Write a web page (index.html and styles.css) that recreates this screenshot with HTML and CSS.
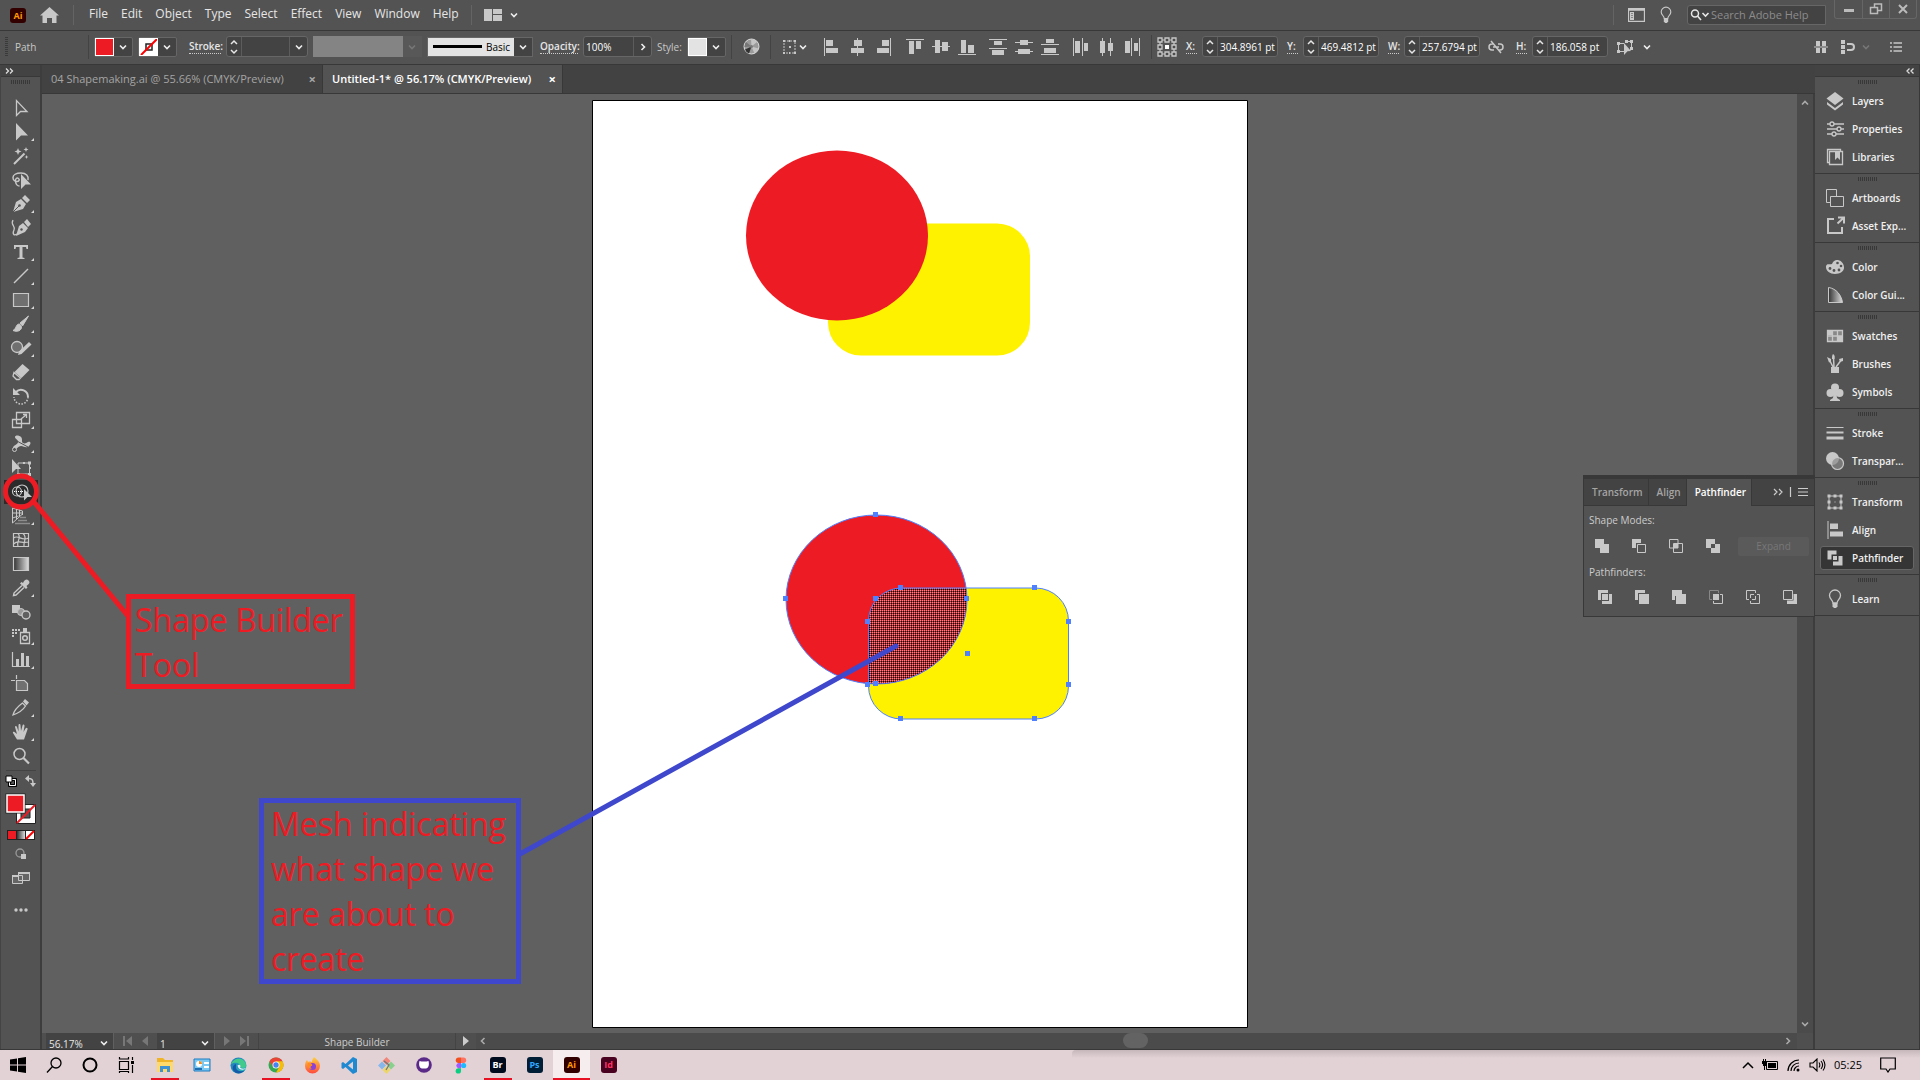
FILE: index.html
```html
<!DOCTYPE html>
<html lang="en">
<head>
<meta charset="utf-8">
<title>Untitled-1* @ 56.17% (CMYK/Preview)</title>
<link rel="stylesheet" href="styles.css">
</head>
<body>
<svg class="defs" aria-hidden="true">
  <defs>
    <symbol id="more" viewBox="0 0 28 24"><path d="M27 18v3h-3z" fill="#d8d8d8"/></symbol>
    <symbol id="chev" viewBox="0 0 10 10"><path d="M2 3.500l3 3 3-3" fill="none" stroke="currentColor" stroke-width="1.600"/></symbol>
    <symbol id="spin" viewBox="0 0 10 18"><path d="M2 6l3-3 3 3M2 12l3 3 3-3" fill="none" stroke="currentColor" stroke-width="1.500"/></symbol>
    <symbol id="bulb" viewBox="0 0 16 20"><path d="M6 14c0-3-3.500-4-3.500-7.500a5.500 5.500 0 0 1 11 0C13.500 10 10 11 10 14z" fill="none" stroke="currentColor" stroke-width="1.300"/><path d="M5.500 14h5v3.500l-1.500 1.500h-2l-1.500-1.500z" fill="currentColor"/></symbol>
    <linearGradient id="fade"><stop offset="0" stop-color="#333"/><stop offset="1" stop-color="#ddd"/></linearGradient>
    <linearGradient id="edgeBlue" x2="1" y2="1"><stop offset="0" stop-color="#1b6fc0"/><stop offset="1" stop-color="#2fc6b8"/></linearGradient>
    <linearGradient id="foxFire" x2="0" y2="1"><stop offset="0" stop-color="#ffd23c"/><stop offset="1" stop-color="#ff4a3d"/></linearGradient>
    <pattern id="mesh" width="2" height="2" patternUnits="userSpaceOnUse"><path d="M0 0h2v2h-2z" fill="#c4222a"/><path d="M0 0h1v1h-1z" fill="#f08a8e"/><path d="M1 1h1v1h-1z" fill="#000"/></pattern>
    <clipPath id="circleClip"><ellipse cx="284.500" cy="499.500" rx="90.500" ry="84.500"/></clipPath>
  </defs>
</svg>

<div class="app">
  <header class="menubar">
    <span class="logo">Ai</span>
    <button class="icon-btn home" aria-label="Home"><svg width="19" height="16" viewBox="0 0 19 16"><path d="M9.500 0L19 8.500h-2.500V16h-4.500v-5h-5v5H2.500V8.500H0z" fill="currentColor"/></svg></button>
    <span class="rule"></span>
    <nav class="menus">
      <button>File</button><button>Edit</button><button>Object</button><button>Type</button><button>Select</button><button>Effect</button><button>View</button><button>Window</button><button>Help</button>
    </nav>
    <span class="rule"></span>
    <button class="icon-btn workspace" aria-label="Arrange documents"><svg width="18" height="12" viewBox="0 0 18 12"><path d="M0 0h8v12H0zM9 0h9v5H9zM9 6h9v6H9z" fill="currentColor"/></svg><svg class="chev"><use href="#chev"/></svg></button>
    <div class="menubar-end">
      <span class="rule"></span>
      <button class="icon-btn" aria-label="Workspace"><svg width="17" height="14" viewBox="0 0 17 14"><path d="M.5.500h16v13H.5zM1 2h15" fill="none" stroke="currentColor" stroke-width="1.300"/><path d="M2 4h4v8H2z" fill="currentColor"/><path d="M3.500 5h1v1h-1zM3.500 7h1v1h-1zM3.500 9h1v1h-1z" fill="#444"/></svg></button>
      <button class="icon-btn" aria-label="Learn"><svg width="14" height="18"><use href="#bulb"/></svg></button>
      <label class="search"><svg width="20" height="12" viewBox="0 0 20 12"><circle cx="5" cy="4.500" r="3.500" fill="none" stroke="currentColor" stroke-width="1.500"/><path d="M7.500 7l3.500 4M12.500 4l3 3 3-3" fill="none" stroke="currentColor" stroke-width="1.600"/></svg><input type="text" placeholder="Search Adobe Help" aria-label="Search Adobe Help"></label>
      <div class="window-btns">
        <button aria-label="Minimize"><svg width="12" height="10" viewBox="0 0 12 10"><path d="M1 5h10v3H1z" fill="currentColor"/></svg></button>
        <button aria-label="Restore"><svg width="14" height="12" viewBox="0 0 14 12"><path d="M5.500 4V1h7v6.500H9M1.500 4.500h7v6h-7z" fill="none" stroke="currentColor" stroke-width="1.500"/></svg></button>
        <button aria-label="Close"><svg width="10" height="10" viewBox="0 0 10 10"><path d="M1 1l8 8M9 1L1 9" stroke="currentColor" stroke-width="2"/></svg></button>
      </div>
    </div>
  </header>

  <section class="controlbar" aria-label="Control">
    <span class="grip-v"></span>
    <span class="selection-name">Path</span>
    <span class="rule"></span>
    <button class="swatch-btn" aria-label="Fill"><span class="chip red"></span><svg class="chev"><use href="#chev"/></svg></button>
    <button class="swatch-btn" aria-label="Stroke color"><span class="chip"><svg width="20" height="20" viewBox="0 0 20 20"><path d="M7 7h6v6H7z" fill="none" stroke="#222" stroke-width="1.500"/><path d="M2 18L18 2" stroke="#f00" stroke-width="2"/></svg></span><svg class="chev"><use href="#chev"/></svg></button>
    <label class="lead" for="weight">Stroke:</label>
    <div class="field weight"><button class="spin" aria-label="Step weight"><svg><use href="#spin"/></svg></button><input id="weight" type="text" value=""><button class="drop" aria-label="Weights"><svg class="chev"><use href="#chev"/></svg></button></div>
    <button class="profile" aria-label="Width profile" disabled><span></span><svg class="chev"><use href="#chev"/></svg></button>
    <button class="brush" aria-label="Brush definition"><span><i></i>Basic</span><svg class="chev"><use href="#chev"/></svg></button>
    <label class="opacity-label" for="opacity">Opacity:</label>
    <div class="field opacity"><input id="opacity" type="text" value="100%"><button class="drop" aria-label="Opacity slider"><svg class="chev turn"><use href="#chev"/></svg></button></div>
    <span class="style-label">Style:</span>
    <button class="swatch-btn" aria-label="Graphic style"><span class="chip grey"></span><svg class="chev"><use href="#chev"/></svg></button>
    <span class="rule"></span>
    <button class="icon-btn recolor" aria-label="Recolor artwork"><svg width="17" height="17" viewBox="0 0 17 17"><circle cx="8.500" cy="8.500" r="7.500" fill="#9a9a9a" stroke="#ddd"/><path d="M8.500 8.500L8 1a7.500 7.500 0 0 1 6 3zM8.500 8.500l7 2a7.500 7.500 0 0 1-4 5z" fill="#c4c4c4"/><path d="M8.500 8.500L6 15.500a7 7 0 0 1-4-4z" fill="#333"/><path d="M8.500 8.500L1.500 9a7 7 0 0 1 1.500-5z" fill="#777"/><circle cx="8.500" cy="8.500" r="1.500" fill="#777"/></svg></button>
    <span class="rule"></span>
    <button class="icon-btn align-to" aria-label="Align to"><svg width="15" height="16" viewBox="0 0 15 16"><path d="M2 2h11v12H2z" fill="none" stroke="currentColor" stroke-dasharray="2 1"/><path d="M1 1h2v2H1zM12 1h2v2h-2zM1 13h2v2H1zM12 13h2v2h-2zM7 1h1v2H7zM7 13h1v2H7zM7 7h2v2H7z" fill="currentColor"/></svg><svg class="chev"><use href="#chev"/></svg></button>
    <div class="aligns">
      <button aria-label="Align left"><svg viewBox="0 0 18 18"><path d="M1 0h1v18H1zM3 2h7v6H3zM3 10h12v5H3z"/></svg></button>
      <button aria-label="Align center"><svg viewBox="0 0 18 18"><path d="M8 0h1v18H8zM5 2h8v6H5zM2 10h13v5H2z"/></svg></button>
      <button aria-label="Align right"><svg viewBox="0 0 18 18"><path d="M15 0h1v18h-1zM7 2h7v6H7zM2 10h12v5H2z"/></svg></button>
    </div>
    <div class="aligns">
      <button aria-label="Align top"><svg viewBox="0 0 18 18"><path d="M0 1h18v1H0zM3 3h5v13H3zM10 3h5v8h-5z"/></svg></button>
      <button aria-label="Align middle"><svg viewBox="0 0 18 18"><path d="M0 8h18v1H0zM3 2h5v13H3zM10 4h6v9h-6z"/></svg></button>
      <button aria-label="Align bottom"><svg viewBox="0 0 18 18"><path d="M0 16h18v1H0zM3 2h5v13H3zM10 7h6v8h-6z"/></svg></button>
    </div>
    <div class="aligns">
      <button aria-label="Distribute top"><svg viewBox="0 0 18 18"><path d="M0 1h18v1H0zM5 3h8v4H5zM0 10h18v1H0zM3 12h12v5H3z"/></svg></button>
      <button aria-label="Distribute middle"><svg viewBox="0 0 18 18"><path d="M0 4h18v1H0zM5 2h8v5H5zM0 13h18v1H0zM3 11h12v5H3z"/></svg></button>
      <button aria-label="Distribute bottom"><svg viewBox="0 0 18 18"><path d="M0 6h18v1H0zM5 1h8v4H5zM0 16h18v1H0zM3 10h12v5H3z"/></svg></button>
    </div>
    <div class="aligns">
      <button aria-label="Distribute left"><svg viewBox="0 0 18 18"><path d="M1 0h1v18H1zM3 3h5v12H3zM10 0h1v18h-1zM12 5h4v8h-4z"/></svg></button>
      <button aria-label="Distribute center"><svg viewBox="0 0 18 18"><path d="M4 0h1v18H4zM2 3h5v12H2zM12 0h1v18h-1zM10 5h5v8h-5z"/></svg></button>
      <button aria-label="Distribute right"><svg viewBox="0 0 18 18"><path d="M7 0h1v18H7zM1 3h5v12H1zM15 0h1v18h-1zM10 5h4v8h-4z"/></svg></button>
    </div>
    <span class="rule"></span>
    <button class="icon-btn" aria-label="Reference point"><svg width="20" height="20" viewBox="0 0 20 20"><path d="M3 3h14v14H3z" fill="none" stroke="currentColor" stroke-width="1.200"/><g fill="#4b4b4b" stroke="currentColor" stroke-width="1.300"><path d="M1 1h4v4H1zM8 1h4v4H8zM15 1h4v4h-4zM1 8h4v4H1zM15 8h4v4h-4zM1 15h4v4H1zM8 15h4v4H8zM15 15h4v4h-4z"/></g><path d="M8 8h4v4H8z" fill="#fff"/></svg></button>
    <label class="axis" for="fx">X:</label>
    <div class="field coord"><button class="spin" aria-label="Step X"><svg><use href="#spin"/></svg></button><input id="fx" type="text" value="304.8961 pt"></div>
    <label class="axis" for="fy">Y:</label>
    <div class="field coord"><button class="spin" aria-label="Step Y"><svg><use href="#spin"/></svg></button><input id="fy" type="text" value="469.4812 pt"></div>
    <label class="axis" for="fw">W:</label>
    <div class="field coord"><button class="spin" aria-label="Step width"><svg><use href="#spin"/></svg></button><input id="fw" type="text" value="257.6794 pt"></div>
    <button class="icon-btn link" aria-label="Constrain proportions"><svg width="16" height="14" viewBox="0 0 16 14"><path d="M6 4H4a3 3 0 0 0 0 6h2M10 4h2a3 3 0 0 1 0 6h-2M5 7h6M3 1l10 12" fill="none" stroke="currentColor" stroke-width="1.500"/></svg></button>
    <label class="axis" for="fh">H:</label>
    <div class="field coord"><button class="spin" aria-label="Step height"><svg><use href="#spin"/></svg></button><input id="fh" type="text" value="186.058 pt"></div>
    <button class="icon-btn isolate" aria-label="Isolate"><svg width="18" height="18" viewBox="0 0 18 18"><path d="M8 5.500H2.500v8H8M10 3.500h5.500v7" fill="none" stroke="currentColor"/><path d="M1 4h3v3H1zM1 12h3v3H1zM9 2h3v3H9zM14 2h3v3h-3zM14 9h3v3h-3zM8 5l7 8-3.500.3L8 17z" fill="currentColor"/></svg><svg class="chev"><use href="#chev"/></svg></button>
    <div class="control-end">
      <button class="icon-btn" aria-label="Snap to pixel"><svg width="14" height="14" viewBox="0 0 14 14"><path d="M2 1h4v5H2zM8 1h4v5H8zM2 8h4v5H2zM8 8h4v5H8zM0 6.500h14v1H0z" fill="currentColor"/></svg></button>
      <button class="icon-btn snap" aria-label="Snap options"><svg width="14" height="14" viewBox="0 0 14 14"><path d="M0 0h4v4H0zM0 5h4v4H0zM0 10h4v4H0z" fill="currentColor"/><path d="M6 4h4a3 3 0 0 1 0 6H6" fill="none" stroke="currentColor" stroke-width="2"/></svg><svg class="chev dim"><use href="#chev"/></svg></button>
      <button class="icon-btn" aria-label="Control menu"><svg width="12" height="10" viewBox="0 0 12 10"><path d="M0 1h2M3.500 1H12M0 5h2M3.500 5H12M0 9h2M3.500 9H12" stroke="currentColor" stroke-width="1.300"/></svg></button>
    </div>
  </section>

  <div class="workarea">
    <aside class="toolbar" aria-label="Tools">
      <div class="tool-head"><svg width="10" height="8" viewBox="0 0 10 8"><path d="M1 1.500l2.500 2.500L1 6.500M5 1.500l2.500 2.500L5 6.500" fill="none" stroke="#ddd" stroke-width="1.300"/></svg></div>
      <div class="grip-h"></div>
      <button class="tool" aria-label="Selection"><svg viewBox="0 0 28 24"><path d="M9.500 4.500v15l4-4h6.500z" fill="none" stroke="currentColor" stroke-width="1.300"/></svg></button>
      <button class="tool" aria-label="Direct selection"><svg viewBox="0 0 28 24"><path d="M9 3v17.500l5-5h7z" fill="currentColor"/><use href="#more"/></svg></button>
      <button class="tool" aria-label="Magic wand"><svg viewBox="0 0 28 24"><path d="M7 20L17.500 9.500" stroke="currentColor" stroke-width="2"/><path d="M11 4l1 2.500 2.500 1-2.500 1-1 2.500-1-2.500-2.500-1 2.500-1zM19 3l.7 1.800 1.800.7-1.800.7L19 8l-.7-1.800-1.800-.7 1.800-.7zM19.500 11l.6 1.500 1.400.5-1.400.6-.6 1.400-.6-1.400-1.400-.6 1.400-.5z" fill="currentColor"/></svg></button>
      <button class="tool" aria-label="Lasso"><svg viewBox="0 0 28 24"><path d="M21 12c1-4-2-7-7-7s-8 2-8 4.500 2 4 4 4 3-2 1.500-3-3.500 0-3 3 2 4.500 4 4.500" fill="none" stroke="currentColor" stroke-width="1.500"/><path d="M14 6v15l4.500-4.500H24z" fill="currentColor"/></svg></button>
      <button class="tool" aria-label="Pen"><svg viewBox="0 0 28 24"><path d="M6 20l3-10 5-3 5 5-3 5zM15 6l3-3 5 5-3 3z" fill="currentColor"/><path d="M6 20l6-6" stroke="#535353"/><circle cx="12.500" cy="13.500" r="1.300" fill="#535353"/><use href="#more"/></svg></button>
      <button class="tool" aria-label="Curvature"><svg viewBox="0 0 28 24"><path d="M6 4c-3 5 3 6 1 10s0 6 3 4" fill="none" stroke="currentColor" stroke-width="1.300"/><path d="M9 20l3-10 4-3 5 5-3 4zM17 6l3-3 4 5-3 3z" fill="currentColor"/><circle cx="14.500" cy="13.500" r="1.200" fill="#535353"/></svg></button>
      <button class="tool" aria-label="Type"><svg viewBox="0 0 28 24"><path d="M7 5h14v4h-1.500l-.5-2h-3.500v10.500l2 .5v1h-7v-1l2-.5V7H9l-.5 2H7z" fill="currentColor"/><use href="#more"/></svg></button>
      <button class="tool" aria-label="Line segment"><svg viewBox="0 0 28 24"><path d="M7 19L21 5" stroke="currentColor" stroke-width="1.500"/><use href="#more"/></svg></button>
      <button class="tool" aria-label="Rectangle"><svg viewBox="0 0 28 24"><path d="M6.500 5.500h15v13h-15z" fill="#707070" stroke="currentColor" stroke-width="1.200"/><use href="#more"/></svg></button>
      <button class="tool" aria-label="Paintbrush"><svg viewBox="0 0 28 24"><path d="M21.500 4L13 11l2.500 3z M12.500 12c-4 0-3 5-6.500 6.500 4 2 9 0 8.500-4z" fill="currentColor" stroke="currentColor"/><use href="#more"/></svg></button>
      <button class="tool" aria-label="Shaper"><svg viewBox="0 0 28 24"><circle cx="10" cy="11" r="5.500" fill="#707070" stroke="currentColor" stroke-width="1.300"/><path d="M11 19l1-3.500L22 6l2.500 2.500L14.500 18z" fill="currentColor"/><use href="#more"/></svg></button>
      <button class="tool" aria-label="Eraser"><svg viewBox="0 0 28 24"><path d="M15.500 4l7 6-8 8-7-6z" fill="currentColor"/><path d="M7 12.500l6.500 5.500-1.500 1.500H9.500L6 16z" fill="none" stroke="currentColor" stroke-width="1.300"/><use href="#more"/></svg></button>
      <button class="tool" aria-label="Rotate"><svg viewBox="0 0 28 24"><path d="M9 8a7 7 0 0 1 12 5" fill="none" stroke="currentColor" stroke-width="2"/><path d="M6 4v7h7z" fill="currentColor"/><path d="M21 13a7 7 0 0 1-14 0" fill="none" stroke="currentColor" stroke-width="1.500" stroke-dasharray="1.500 1.500"/><use href="#more"/></svg></button>
      <button class="tool" aria-label="Scale"><svg viewBox="0 0 28 24"><path d="M9.500 4.500h13v11h-13zM5.500 11.500h9v8h-9zM14 11l5-4M16 6.500h3.500V10" fill="none" stroke="currentColor" stroke-width="1.300"/><use href="#more"/></svg></button>
      <button class="tool" aria-label="Width"><svg viewBox="0 0 28 24"><path d="M6 17c3 2 5-3 8-3s5 3 8 0 1-5-1-4-3 2-5 1 0-4-2-6-6-2-6 0 3 2 3 5-6 3-5 7z" fill="currentColor"/><path d="M8 8l13 7" stroke="#535353"/><circle cx="7.500" cy="17.500" r="2" fill="#535353" stroke="currentColor"/><use href="#more"/></svg></button>
      <button class="tool" aria-label="Free transform"><svg viewBox="0 0 28 24"><path d="M11 7h11.500v11H11z" fill="none" stroke="currentColor"/><path d="M5 3v14l4-4h5zM21 5.500h3v3h-3zM21 17h3v3h-3zM10 17h3v3h-3zM16 6h2v2h-2zM22 11h2v2h-2z" fill="currentColor"/></svg></button>
      <button class="tool active" aria-label="Shape builder"><svg viewBox="0 0 28 24"><circle cx="10" cy="11.500" r="4.500" fill="none" stroke="currentColor" stroke-width="1.200"/><circle cx="15" cy="11" r="6" fill="none" stroke="currentColor" stroke-width="1.200"/><path d="M7 11.500h10" stroke="#fff" stroke-dasharray="1 1"/><path d="M17 9v11.500l3.500-3.500H25z" fill="currentColor"/></svg></button>
      <button class="tool" aria-label="Perspective grid"><svg viewBox="0 0 28 24"><path d="M5.500 4v15M9.500 4v11M12.500 5.500v7M15.500 7v4M5.500 4l10 3M5.500 9h10M5.500 19l10-9M5.500 14l6-2" fill="none" stroke="currentColor"/><path d="M8 19.500h15M11 16.500h9M13 13.500h6" stroke="#8d8d8d" stroke-width="1.500"/><use href="#more"/></svg></button>
      <button class="tool" aria-label="Mesh"><svg viewBox="0 0 28 24"><path d="M6.500 5.500h15v13h-15zM6.500 10c5-4 8 4 15 0M6.500 16c5-5 8 0 15-2M11 5.500c4 4-2 8 0 13M16 5.500c5 4 0 8 1 13" fill="none" stroke="currentColor" stroke-width="1.200"/></svg></button>
      <button class="tool" aria-label="Gradient"><svg viewBox="0 0 28 24"><path d="M6.500 5.500h15v13h-15z" fill="url(#fade)" stroke="currentColor" stroke-width="1.200"/></svg></button>
      <button class="tool" aria-label="Eyedropper"><svg viewBox="0 0 28 24"><path d="M15 9.500l-8 7.500-.5 2.500L9 19l8-7.500" fill="none" stroke="currentColor" stroke-width="1.400"/><path d="M13 7.500l1.500-1.500 1.500 1c2-4 4-4 5.500-2.500s1.500 3-2 5.500l1 1.500-1.500 1.500z" fill="currentColor"/><use href="#more"/></svg></button>
      <button class="tool" aria-label="Blend"><svg viewBox="0 0 28 24"><path d="M5 5h8v8H5z" fill="currentColor"/><circle cx="14" cy="12" r="3.500" fill="#999" stroke="currentColor"/><circle cx="19" cy="15" r="4" fill="#606060" stroke="currentColor" stroke-width="1.400"/></svg></button>
      <button class="tool" aria-label="Symbol sprayer"><svg viewBox="0 0 28 24"><path d="M13.500 8.500h9v11h-9z" fill="none" stroke="currentColor" stroke-width="1.300"/><path d="M16 4h4v4h-4zM5 5h2v2H5zM8 5h2v2H8zM11 5h2v2h-2zM5 8h2v2H5zM8 8h2v2H8zM5 11h2v2H5z" fill="currentColor"/><circle cx="18" cy="14" r="2.300" fill="none" stroke="currentColor" stroke-width="1.500"/><use href="#more"/></svg></button>
      <button class="tool" aria-label="Column graph"><svg viewBox="0 0 28 24"><path d="M5.500 4v14.500H23" fill="none" stroke="currentColor" stroke-width="1.200"/><path d="M9 11h3v7H9zM14 5h3v13h-3zM19 8h3v10h-3z" fill="currentColor"/><use href="#more"/></svg></button>
      <button class="tool" aria-label="Artboard"><svg viewBox="0 0 28 24"><path d="M9.500 8.500h8l3 3v7h-11z" fill="#707070" stroke="currentColor" stroke-width="1.200"/><path d="M9.500 3v4M4 8.500h4" stroke="currentColor" stroke-width="1.200"/></svg></button>
      <button class="tool" aria-label="Slice"><svg viewBox="0 0 28 24"><path d="M6 19c1-4 4-8 9.500-12l3 3c-3 5-7 7-12.500 9z" fill="none" stroke="currentColor" stroke-width="1.300"/><path d="M16 5.500L18 3l4 3.500-2.500 3z" fill="currentColor"/><use href="#more"/></svg></button>
      <button class="tool" aria-label="Hand"><svg viewBox="0 0 28 24"><path d="M10 19.500L6 13c-.5-1.500 1-1.500 1.500-1l2.500 2L8 7c0-1.500 1.500-1.500 2 0l1.500 4.500V5c0-1.500 2-1.500 2 0l.5 6 1.500-5.500c.5-1.500 2-1 2 .5l-1 6 2-3.500c1-1.500 2.500-.5 2 1l-3.500 10z" fill="currentColor"/><use href="#more"/></svg></button>
      <button class="tool" aria-label="Zoom"><svg viewBox="0 0 28 24"><circle cx="12.500" cy="10" r="5.500" fill="none" stroke="currentColor" stroke-width="1.500"/><path d="M16.500 14l5.500 5.500" stroke="currentColor" stroke-width="2.200"/></svg></button>
      <div class="tool-rule"></div>
      <div class="color-tools">
        <button class="icon-btn" aria-label="Default fill and stroke"><svg width="12" height="12" viewBox="0 0 12 12"><path d="M4.500 4.500h6v6h-6z" fill="none" stroke="#fff"/><path d="M3.500 3.500h8v8h-8z" fill="none" stroke="#000"/><path d="M5.500 5.500h4v4h-4z" fill="none" stroke="#000"/><path d="M1 1h6v6H1z" fill="#fff" stroke="#000"/></svg></button>
        <button class="icon-btn" aria-label="Swap fill and stroke"><svg width="12" height="12" viewBox="0 0 12 12"><path d="M3 3.500c4 0 5 1 5 5" fill="none" stroke="currentColor" stroke-width="1.500"/><path d="M4 0v7L0 3.500zM5 8h6l-3 4z" fill="currentColor"/></svg></button>
      </div>
      <svg class="fillstroke" width="32" height="32" viewBox="0 0 32 32" role="img" aria-label="Fill red, stroke none"><path d="M11.500 11.500h19v19h-19z" fill="#fff" stroke="#222"/><path d="M16 16h9v9h-9z" fill="#555" stroke="#222"/><path d="M12 30L30 12" stroke="#ed1c24" stroke-width="2"/><path d="M.5.500h20v20H.5z" fill="#222"/><path d="M2 2h17v17H2z" fill="#ed1c24" stroke="#fff" stroke-width="1.500"/></svg>
      <svg class="modes" width="28" height="10" viewBox="0 0 28 10" role="img" aria-label="Color, gradient, none"><path d="M0 0h28v10H0z" fill="#222"/><path d="M1 1h8v8H1z" fill="#ed1c24"/><path d="M10 1h8v8h-8z" fill="url(#fade)"/><path d="M19 1h8v8h-8z" fill="#fff"/><path d="M19 9l8-8" stroke="#f00" stroke-width="2"/></svg>
      <button class="tool" aria-label="Drawing mode"><svg viewBox="0 0 28 24"><circle cx="13" cy="11" r="4" fill="none" stroke="#999" stroke-width="1.300"/><path d="M14 12h5v5h-5z" fill="currentColor"/></svg></button>
      <button class="tool" aria-label="Screen mode"><svg viewBox="0 0 28 24"><path d="M5.500 9.500h10v8h-10zM11.500 6.500h11v8h-11z" fill="#666" stroke="currentColor"/><path d="M5 9h6v2H5zM11 6h12v2H11z" fill="currentColor"/></svg></button>
      <button class="tool tool-dots" aria-label="Edit toolbar"><svg viewBox="0 0 28 24"><g fill="currentColor"><circle cx="9" cy="12" r="1.700"/><circle cx="14" cy="12" r="1.700"/><circle cx="19" cy="12" r="1.700"/></g></svg></button>
    </aside>

    <main class="document">
      <div class="doc-tabs" role="tablist">
        <div class="doc-tab" role="tab"><span>04 Shapemaking.ai @ 55.66% (CMYK/Preview)</span><button aria-label="Close tab">×</button></div>
        <div class="doc-tab current" role="tab" aria-selected="true"><span>Untitled-1* @ 56.17% (CMYK/Preview)</span><button aria-label="Close tab">×</button></div>
      </div>
      <div class="canvas-row">
        <div class="canvas">
          <svg class="artboard" width="656" height="928" viewBox="0 0 656 928" role="img" aria-label="Artboard">
            <path d="M.5.500h655v927H.5z" fill="#fff" stroke="#000"/>
            <rect x="236" y="123.500" width="202" height="132" rx="33" fill="#fff200"/>
            <ellipse cx="245" cy="135.500" rx="91" ry="85" fill="#ed1c24"/>
            <rect x="276.500" y="488" width="200" height="131" rx="33" fill="#fff200"/>
            <ellipse cx="284.500" cy="499.500" rx="90.500" ry="84.500" fill="#ed1c24"/>
            <rect x="276.500" y="488" width="200" height="131" rx="33" fill="url(#mesh)" clip-path="url(#circleClip)"/>
            <g fill="none" stroke="#4f80ff"><ellipse cx="284.500" cy="499.500" rx="90.500" ry="84.500"/><rect x="276.500" y="488" width="200" height="131" rx="33"/></g>
            <path fill="#4f80ff" d="M281 412h5v5h-5zM191 496h5v5h-5zM372 496h5v5h-5zM281 581h5v5h-5zM281 496h5v5h-5zM306 485h5v5h-5zM440 485h5v5h-5zM273 519h5v5h-5zM474 519h5v5h-5zM273 582h5v5h-5zM474 582h5v5h-5zM306 616h5v5h-5zM440 616h5v5h-5zM373 551h5v5h-5z"/>
          </svg>
        </div>
        <div class="vscroll"><svg class="chev flip"><use href="#chev"/></svg><svg class="chev"><use href="#chev"/></svg></div>
      </div>
      <div class="statusbar">
        <select class="pick zoom" aria-label="Zoom level"><option>56.17%</option></select>
        <span class="nav" aria-hidden="true"><svg width="12" height="10" viewBox="0 0 12 10"><path d="M1 0h2v10H1zM10 0v10L4 5z"/></svg><svg width="8" height="10" viewBox="0 0 8 10"><path d="M7 0v10L1 5z"/></svg></span>
        <select class="pick page" aria-label="Artboard number"><option>1</option></select>
        <span class="nav" aria-hidden="true"><svg width="8" height="10" viewBox="0 0 8 10"><path d="M1 0v10l6-5z"/></svg><svg width="12" height="10" viewBox="0 0 12 10"><path d="M2 0v10l6-5zM9 0h2v10H9z"/></svg></span>
        <span class="status-text">Shape Builder</span>
        <button class="status-more" aria-label="Status options"><svg width="8" height="10" viewBox="0 0 8 10"><path d="M1 0v10l6-5z" fill="#ccc"/></svg></button>
        <div class="hscroll"><svg class="chev left"><use href="#chev"/></svg><span class="thumb"></span><svg class="chev turn"><use href="#chev"/></svg></div>
        <span class="corner"></span>
      </div>
    </main>

    <aside class="dock" aria-label="Panels">
      <div class="dock-head"><svg width="10" height="8" viewBox="0 0 10 8"><path d="M4.500 1.500L2 4l2.500 2.500M8.500 1.500L6 4l2.500 2.500" fill="none" stroke="#ddd" stroke-width="1.300"/></svg></div>
      <div class="dock-group"><span class="grip-h"></span>
        <button><svg viewBox="0 0 20 20"><path d="M10 1l8.500 6.500L10 14 1.500 7.500z" fill="currentColor"/><path d="M2 11l8 6 8-6v2.500l-8 6-8-6z" fill="currentColor"/></svg>Layers</button>
        <button><svg viewBox="0 0 20 20"><g fill="#535353" stroke="currentColor" stroke-width="1.300"><path d="M2 5h17M2 10h17M2 15h17"/><circle cx="7" cy="5" r="2"/><circle cx="14" cy="10" r="2"/><circle cx="9" cy="15" r="2"/></g></svg>Properties</button>
        <button><svg viewBox="0 0 20 20"><path d="M4 15.500H2.500v-13h13V4M4.500 4.500h13v13h-13z" fill="none" stroke="currentColor" stroke-width="1.300"/><path d="M10 5h5v8l-2.500-2.500L10 13z" fill="currentColor"/></svg>Libraries</button>
      </div>
      <div class="dock-group"><span class="grip-h"></span>
        <button><svg viewBox="0 0 20 20"><path d="M1.500 1.500h10v13h-10z" fill="none" stroke="currentColor"/><path d="M5.500 8.500h13v10h-13z" fill="#535353" stroke="currentColor"/></svg>Artboards</button>
        <button><svg viewBox="0 0 20 20"><path d="M9 3H3v14h14v-6" fill="none" stroke="currentColor" stroke-width="2"/><path d="M13 1.500h6v6M19 1.500l-6.500 6" fill="none" stroke="currentColor" stroke-width="2"/></svg>Asset Exp...</button>
      </div>
      <div class="dock-group"><span class="grip-h"></span>
        <button><svg viewBox="0 0 20 20"><path d="M1 10c0-4 4-2 6-3 1-2 2-4 6-4 4 1 6 4 6 8 0 3-4 6-9 6s-9-3-9-7z" fill="currentColor"/><g fill="#535353"><circle cx="5" cy="11.500" r="1.400"/><circle cx="9" cy="13.500" r="1.400"/><circle cx="14" cy="13" r="1.400"/><circle cx="16" cy="9" r="1.300"/><circle cx="12.500" cy="6" r="1.300"/></g></svg>Color</button>
        <button><svg viewBox="0 0 20 20"><path d="M3.500 2.500c8 1 13 8 14 15h-14z" fill="url(#fade)" stroke="currentColor"/></svg>Color Gui...</button>
      </div>
      <div class="dock-group"><span class="grip-h"></span>
        <button><svg viewBox="0 0 20 20"><path d="M2.500 4.500h15v11h-15z" fill="#888" stroke="currentColor" stroke-width="1.300"/><path d="M3 5h4v4H3zM13 10h4v5h-4z" fill="currentColor"/><path d="M2 10h16M7.500 5v10M12.500 5v10" stroke="currentColor" stroke-width="1.300"/></svg>Swatches</button>
        <button><svg viewBox="0 0 20 20"><path d="M6 13h8v6H6zM8 0c2 1 2 3 1.500 5H7C7 3 7 1 8 0zM2 3l4 2v3l-2 .5zM14 5l4-1v3l-3 1z" fill="currentColor"/><path d="M8.500 4L9 13M5 7l3 6M15.500 7L11 13" stroke="currentColor" stroke-width="1.500"/></svg>Brushes</button>
        <button><svg viewBox="0 0 20 20"><g fill="currentColor"><circle cx="10" cy="5.500" r="4"/><circle cx="5.500" cy="11" r="4"/><circle cx="14.500" cy="11" r="4"/><path d="M9 8h2l1 8 3 2v1H5v-1l3-2z"/></g></svg>Symbols</button>
      </div>
      <div class="dock-group"><span class="grip-h"></span>
        <button><svg viewBox="0 0 20 20"><path d="M1.500 4h17v1h-17zM1.500 8.500h17v2h-17zM1.500 13.500h17v3h-17z" fill="currentColor"/></svg>Stroke</button>
        <button><svg viewBox="0 0 20 20"><circle cx="7.500" cy="7.500" r="6.500" fill="currentColor"/><circle cx="12.500" cy="12.500" r="6" fill="#8a8a8a" fill-opacity=".7" stroke="currentColor" stroke-width="1.200"/></svg>Transpar...</button>
      </div>
      <div class="dock-group"><span class="grip-h"></span>
        <button><svg viewBox="0 0 20 20"><path d="M4 4h12v12H4z" fill="none" stroke="currentColor"/><path d="M2.500 2.500h3v3h-3zM8.500 2.500h3v3h-3zM14.500 2.500h3v3h-3zM2.500 8.500h3v3h-3zM14.500 8.500h3v3h-3zM2.500 14.500h3v3h-3zM8.500 14.500h3v3h-3zM14.500 14.500h3v3h-3zM9.500 9.500h1v1h-1z" fill="currentColor"/></svg>Transform</button>
        <button><svg viewBox="0 0 20 20"><path d="M2.500 1h1v18h-1zM5 3.500h8V9H5zM5 11.500h13v5H5z" fill="currentColor"/></svg>Align</button>
        <button class="on"><svg viewBox="0 0 20 20"><path d="M2.500 2.500h9v4h-5v5h-4zM8 8h4v4H8zM13.500 8h4v9.500H8v-4h5.500z" fill="currentColor"/></svg>Pathfinder</button>
      </div>
      <div class="dock-group"><span class="grip-h"></span>
        <button><svg viewBox="0 0 20 20"><use href="#bulb" x="2" y="0" width="16" height="20"/></svg>Learn</button>
      </div>
    </aside>
  </div>

  <footer class="taskbar">
    <div class="apps">
      <button class="sys" aria-label="Start"><svg width="16" height="16" viewBox="0 0 16 16"><path d="M0 2.500l7-1v6H0zM8 1.300L16 0v7.500H8zM0 8.500h7v6l-7-1zM8 8.500h8V16l-8-1.300z" fill="#000"/></svg></button>
      <button class="sys" aria-label="Search"><svg width="16" height="16" viewBox="0 0 16 16"><circle cx="10" cy="6" r="5" fill="none" stroke="#000" stroke-width="1.300"/><path d="M6.500 9.500L1 15.500" stroke="#000" stroke-width="1.300"/></svg></button>
      <button class="sys" aria-label="Cortana"><svg width="16" height="16" viewBox="0 0 16 16"><circle cx="8" cy="8" r="6.500" fill="none" stroke="#000" stroke-width="2"/></svg></button>
      <button class="sys" aria-label="Task view"><svg width="17" height="16" viewBox="0 0 17 16"><path d="M1.500 4.500h9v8h-9zM1.500 0v2h9V0M1.500 16v-1.500h9V16M14.500 0v3M14.500 8v8" fill="none" stroke="#000" stroke-width="1.200"/><path d="M13 4h3v3h-3z"/></svg></button>
      <button class="run" aria-label="File Explorer"><svg width="18" height="16" viewBox="0 0 18 16"><path d="M1 1h6l2 2h8v12H1z" fill="#f0b429"/><path d="M1 5h16v10H1z" fill="#ffd969"/><path d="M4 15V9h10v6h-3v-3H7v3z" fill="#3f92d2"/></svg></button>
      <button aria-label="Control Panel"><svg width="18" height="16" viewBox="0 0 18 16"><path d="M1 2h16v12H1z" fill="#7cc8f0" stroke="#1d7ac0"/><circle cx="6" cy="7" r="3" fill="#fff"/><path d="M6 7V4a3 3 0 0 1 3 3z" fill="#f38b1e"/><path d="M11 5h5v2h-5zM11 9h5v2h-5z" fill="#fff"/><path d="M2 11h7v2H2z" fill="#1d6db0"/></svg></button>
      <button aria-label="Edge"><svg width="17" height="17" viewBox="0 0 17 17"><circle cx="8.500" cy="8.500" r="8" fill="url(#edgeBlue)"/><path d="M1 7c2-6 13-8 15 1 0 4-5 3-6 2 1-3-3-6-9-3z" fill="#42c98c"/><path d="M6 9c-1 4 4 7 9 4-2 3-6 4-9 3-5-3-4-8 0-9z" fill="#155aa8"/><path d="M7.500 8.500c2-2 4 0 2.500 2 2 1.500 4 1.500 6 .5-2 3-8 2-8.500-2.500z" fill="#e8eef5"/></svg></button>
      <button class="run" aria-label="Chrome"><svg width="16" height="16" viewBox="0 0 16 16"><circle cx="8" cy="8" r="7.500" fill="#34a853"/><path d="M1.500 4.200A7.500 7.500 0 0 1 14.500 4.200L8 6z" fill="#ea4335"/><path d="M8 4.200h6.500A7.500 7.500 0 0 1 8 15.500l3.300-5.500z" fill="#fbbc05"/><path d="M1.500 4.200L5 10l3-2V4.200z" fill="#ea4335"/><circle cx="8" cy="8" r="3.500" fill="#fff"/><circle cx="8" cy="8" r="2.700" fill="#4285f4"/></svg></button>
      <button aria-label="Firefox"><svg width="17" height="17" viewBox="0 0 17 17"><path d="M10 0c2 2 6 4 6 9a7.500 7.500 0 0 1-15 0c0-3 1-5 2-6l1 2c2-1 4 0 4 0C8 3 9 1 10 0z" fill="url(#foxFire)"/><circle cx="8.500" cy="9.500" r="3.500" fill="#8a42d8"/><path d="M4 6c3 0 5 1 4 3-2 0-2 2 0 3-4 0-5-3-4-6z" fill="#ff8a1f"/></svg></button>
      <button aria-label="Visual Studio Code"><svg width="17" height="17" viewBox="0 0 17 17"><path d="M12 0l4 2v13l-4 2-7.500-7L2 12 .5 11V6L2 5l2.500 2zM12 4.500L7 8.500l5 4z" fill="#1f8ad2" fill-rule="evenodd"/></svg></button>
      <button aria-label="Git"><svg width="17" height="17" viewBox="0 0 17 17"><path d="M8.500 0l4 4-4 4-4-4z" fill="#f2867a"/><path d="M4 4.500l4 4-4 4-4-4z" fill="#86b6ea"/><path d="M13 4.500l4 4-4 4-4-4z" fill="#8ad08d"/><path d="M8.500 9l4 4-4 4-4-4z" fill="#ecd66b"/><path d="M6 4l5 4-3 5" fill="none" stroke="#777" stroke-width="1.300"/></svg></button>
      <button aria-label="GitHub"><svg width="16" height="16" viewBox="0 0 16 16"><circle cx="8" cy="8" r="7.800" fill="#5b2a88"/><path d="M3.500 4l2 .5h5l2-.5c1 4 0 7-2.500 7.500H6C3.500 11 2.500 8 3.500 4z" fill="#fff"/></svg></button>
      <button aria-label="Figma"><svg width="12" height="17" viewBox="0 0 12 17"><path d="M6 .5H3.500a2.700 2.700 0 0 0 0 5.400H6z" fill="#f24e1e"/><path d="M6 .5h2.500a2.700 2.700 0 0 1 0 5.400H6z" fill="#ff7262"/><path d="M6 5.900H3.500a2.700 2.700 0 0 0 0 5.300H6z" fill="#a259ff"/><circle cx="8.600" cy="8.500" r="2.600" fill="#1abcfe"/><path d="M6 11.200H3.500A2.700 2.700 0 1 0 6 14z" fill="#0acf83"/></svg></button>
      <button class="run" aria-label="Bridge"><span class="adobe br">Br</span></button>
      <button aria-label="Photoshop"><span class="adobe ps">Ps</span></button>
      <button class="run front" aria-label="Illustrator"><span class="adobe ai">Ai</span></button>
      <button aria-label="InDesign"><span class="adobe id">Id</span></button>
    </div>
    <div class="tray">
      <svg width="12" height="8" viewBox="0 0 12 8"><path d="M1 7l5-5 5 5" fill="none" stroke="#000" stroke-width="1.500"/></svg>
      <svg width="16" height="14" viewBox="0 0 16 14"><path d="M4.500 3.500h11v8h-11z" fill="none" stroke="#000"/><path d="M6 5h8v5H6zM0 3h5v3H4v2H1V6H0zM1 1h1v2H1zM3 1h1v2H3zM2 8h1v4H2z"/></svg>
      <svg width="15" height="14" viewBox="0 0 15 14"><path d="M2 13A11 11 0 0 1 13 2M5 13a8 8 0 0 1 8-8M8 13a5 5 0 0 1 5-5" fill="none" stroke="#000" stroke-width="1.200"/><circle cx="12" cy="12" r="1.500"/></svg>
      <svg width="17" height="14" viewBox="0 0 17 14"><path d="M1 5h3l4-4v12L4 9H1zM10 4.500c1 1.500 1 3.500 0 5M12 3c2 2.500 2 5.500 0 8M14 1.500c2.500 3.500 2.500 7.500 0 11" fill="none" stroke="#000" stroke-width="1.100"/></svg>
      <time>05:25</time>
      <svg class="notes" width="16" height="16" viewBox="0 0 16 16"><path d="M.7 1h14.600v11H10l-2 3-2-3H.7z" fill="none" stroke="#000" stroke-width="1.200"/></svg>
    </div>
  </footer>

  <section class="pathfinder" aria-label="Pathfinder">
    <div class="pf-tabs">
      <button>Transform</button><button>Align</button><button class="on">Pathfinder</button>
      <span class="pf-tools"><svg width="35" height="12" viewBox="0 0 35 12"><path d="M1 3l3 3-3 3M6 3l3 3-3 3M17.500 1v10M25 2.500h10M25 6h10M25 9.500h10" fill="none" stroke="#ccc" stroke-width="1.200"/></svg></span>
    </div>
    <div class="pf-body">
      <h2>Shape Modes:</h2>
      <div class="pf-row modes-row">
        <button aria-label="Unite"><svg viewBox="0 0 14 14"><path d="M0 0h9v5h5v9H5V9H0z" fill="currentColor"/></svg></button>
        <button aria-label="Minus front"><svg viewBox="0 0 14 14"><path d="M0 0h9v4H4v5H0z" fill="currentColor"/><path d="M5.500 5.500h8v8h-8z" fill="none" stroke="currentColor"/></svg></button>
        <button aria-label="Intersect"><svg viewBox="0 0 14 14"><path d="M.5.500h8.500v8.500H.5zM4.500 4.500h9v9h-9z" fill="none" stroke="currentColor"/><path d="M5 5h4v4H5z" fill="currentColor"/></svg></button>
        <button aria-label="Exclude"><svg viewBox="0 0 14 14"><path d="M0 0h9v5h5v9H5V9H0zM5 5v4h4V5z" fill="currentColor" fill-rule="evenodd"/></svg></button>
        <button class="expand" disabled>Expand</button>
      </div>
      <h2>Pathfinders:</h2>
      <div class="pf-row finders-row">
        <button aria-label="Divide"><svg viewBox="0 0 14 14"><path d="M0 0h10v3H3v7H0zM4 4h6v6H4zM11 4h3v10H4v-3h7z" fill="currentColor"/></svg></button>
        <button aria-label="Trim"><svg viewBox="0 0 14 14"><path d="M0 0h10v3H3v7H0zM4 4h10v10H4z" fill="currentColor"/></svg></button>
        <button aria-label="Merge"><svg viewBox="0 0 14 14"><path d="M0 0h10v4h4v10H4V6H3v4H0z" fill="currentColor"/></svg></button>
        <button aria-label="Crop"><svg viewBox="0 0 14 14"><path d="M3 9.500H.5V.500h9V3" fill="none" stroke="#888"/><path d="M4 4h6v6H4z" fill="currentColor"/><path d="M11 4.500h2.500v9h-9V11" fill="none" stroke="currentColor"/></svg></button>
        <button aria-label="Outline"><svg viewBox="0 0 14 14"><path d="M3 9.500H.5V.500h9V3M4.500 8V4.500H8M9.500 6v3.500H6M11 4.500h2.500v9h-9V11" fill="none" stroke="currentColor"/></svg></button>
        <button aria-label="Minus back"><svg viewBox="0 0 14 14"><path d="M.5.500h9v9h-9z" fill="none" stroke="currentColor"/><path d="M10.500 4H14v10H4v-3.500h6.500z" fill="currentColor"/></svg></button>
      </div>
    </div>
  </section>

  <svg class="leaders" width="900" height="900" viewBox="0 0 900 900" aria-hidden="true">
    <circle cx="21" cy="491.500" r="15.500" fill="none" stroke="#ed1c24" stroke-width="5"/>
    <path d="M34 502L128 616" stroke="#ed1c24" stroke-width="5"/>
    <path d="M520 854L896 646" stroke="#3f48cc" stroke-width="5" stroke-linecap="round"/>
  </svg>
  <p class="callout tool-note">Shape Builder Tool</p>
  <p class="callout mesh-note">Mesh indicating what shape we are about to create</p>
</div>
</body>
</html>
```

FILE: styles.css
```css
* { box-sizing: border-box; }
body { margin: 0; font: 11px/14px "Open Sans", "Noto Sans", sans-serif; color: #e6e6e6; background: #535353; }
button, input, select { font: inherit; color: inherit; margin: 0; padding: 0; border: 0; background: none; border-radius: 0; }
button { display: flex; align-items: center; justify-content: center; flex: none; }
svg { display: block; flex: none; }
.defs { position: absolute; width: 0; height: 0; }
.app { position: relative; display: flex; flex-direction: column; min-height: 100vh; overflow: hidden; }
.chev { width: 10px; height: 10px; color: #eee; }
.turn { transform: rotate(-90deg); }
.left { transform: rotate(90deg); }
.flip { transform: rotate(180deg); }
.dim { color: #777; }
.rule { flex: none; width: 1px; height: 24px; background: #434343; }
.icon-btn { color: #c8c8c8; }

.menubar { display: flex; align-items: center; height: 31px; padding-left: 10px; border-bottom: 1px solid #383838; }
.logo { width: 16px; height: 15px; border-radius: 3px; background: #330000; color: #ff9a00; font: bold 9px/15px "Open Sans", sans-serif; text-align: center; }
.home { margin: 0 14px; }
.menubar .rule { background: #646464; height: 20px; }
.menus { display: flex; font-size: 12px; padding: 0 5px 2px 9px; }
.menus button { padding: 0 7px 0 6px; }
.workspace { gap: 7px; padding-left: 12px; }
.menubar-end { display: flex; align-items: center; gap: 14px; margin-left: auto; height: 100%; }
.search { display: flex; align-items: center; gap: 1px; width: 139px; height: 20px; padding-left: 2px; background: #434343; border: 1px solid #666; border-radius: 3px 0 0 3px; }
.search input { flex: 1; min-width: 0; outline: 0; }
.search input::placeholder { color: #8c8c8c; }
.window-btns { display: flex; align-self: flex-start; margin: 0 3px 0 -6px; border: 1px solid #666; border-top: 0; border-radius: 0 0 3px 3px; }
.window-btns button { width: 27px; height: 18px; color: #bbb; }
.window-btns button + button { border-left: 1px solid #666; }

.controlbar { display: flex; align-items: center; gap: 5px; height: 34px; padding: 0 0 2px 5px; border-bottom: 1px solid #383838; font-size: 10px; }
.grip-v { flex: none; width: 3px; height: 20px; background: repeating-linear-gradient(#3a3a3a 0 1px, #535353 1px 2px); }
.selection-name { flex: none; width: 70px; padding-left: 2px; color: #c8c8c8; }
.swatch-btn { width: 39px; height: 20px; justify-content: flex-start; border: 1px solid #666; border-radius: 2px; gap: 4px; background: #434343; }
.chip { width: 19px; height: 18px; overflow: hidden; background: #fff; border: 1px solid #fff; display: grid; place-content: center; }
.red { background: #ed1c24; }
.grey { background: #e3e3e3; }
.controlbar label { flex: none; border-bottom: 1px dotted #ccc; font-weight: 600; line-height: 13px; white-space: nowrap; }
.lead { margin-left: 7px; width: 32px; }
.controlbar .lead { letter-spacing: normal; }
.opacity-label { width: 38px; margin-left: 2px; }
.style-label { flex: none; width: 25px; color: #c8c8c8; }
.axis { width: 11px; margin-left: 4px; }
.field { display: flex; flex: none; height: 21px; background: #434343; border: 1px solid #666; border-radius: 3px; }
.field input { flex: 1; min-width: 0; padding: 0 0 0 2px; outline: 0; color: #fff; }
.spin { width: 15px; border-right: 1px solid #5c5c5c; }
.spin svg { width: 10px; height: 18px; }
.drop { width: 18px; border-left: 1px solid #5c5c5c; }
.weight { width: 82px; }
.opacity { width: 69px; }
.coord { width: 76px; }
.profile { width: 109px; height: 21px; justify-content: flex-start; gap: 4px; background: #585858; }
.profile span { width: 90px; height: 21px; background: #848484; }
.profile .chev { color: #777; }
.brush { width: 106px; height: 20px; justify-content: flex-start; gap: 4px; background: #434343; border: 1px solid #666; }
.brush span { display: flex; align-items: center; gap: 4px; width: 86px; height: 18px; padding-left: 5px; background: #e3e3e3; color: #000; }
.brush i { width: 49px; height: 3px; background: #000; }
.recolor { width: 28px; }
.align-to { width: 38px; gap: 1px; }
.aligns { display: flex; flex: none; }
.aligns button { width: 26px; height: 22px; color: #c8c8c8; }
.aligns svg { width: 18px; height: 18px; fill: currentColor; }
.link { width: 22px; }
.isolate { width: 42px; gap: 8px; }
.control-end { display: flex; gap: 13px; margin-left: auto; padding-right: 18px; }
.snap { gap: 6px; padding-right: 6px; }

.workarea { display: flex; flex: 1; border-bottom: 1px solid #383838; }
.toolbar { display: flex; flex-direction: column; align-items: center; flex: none; width: 42px; border-left: 1px solid #444; border-right: 2px solid #3d3d3d; }
.tool-head, .dock-head { align-self: stretch; display: flex; align-items: center; height: 12px; padding: 0 4px; background: #434343; border-bottom: 1px solid #383838; }
.dock-head { justify-content: flex-end; }
.grip-h { flex: none; width: 19px; height: 4px; background: repeating-linear-gradient(90deg, #383838 0 1px, #535353 1px 2px); }
.toolbar > .grip-h { margin: 3px 0 12px; }
.tool { width: 34px; height: 24px; color: #c8c8c8; }
.tool svg { width: 28px; height: 24px; }
.tool.active { background: #2b2b2b; }
.tool-rule { width: 30px; height: 1px; margin: 2px 0 4px; background: #434343; }
.color-tools { display: flex; gap: 8px; margin-bottom: 6px; }
.fillstroke { margin-bottom: 5px; }
.modes { margin-bottom: 2px; }
.tool-dots { margin-top: 8px; }

.document { display: flex; flex: 1; flex-direction: column; min-width: 0; }
.doc-tabs { display: flex; height: 29px; background: #424242; border-bottom: 1px solid #383838; }
.doc-tab { display: flex; flex: none; align-items: center; justify-content: space-between; width: 281px; padding: 0 6px 0 9px; border-right: 1px solid #383838; color: #a5a5a5; white-space: nowrap; }
.doc-tab.current { width: 240px; background: #535353; color: #fff; font-weight: 600; }
.doc-tab button { font: bold 13px/14px "Open Sans", sans-serif; }
.canvas-row { display: flex; flex: 1; }
.canvas { display: flex; flex: 1; justify-content: center; padding: 6px 0 5px; background: #606060; }
.vscroll { display: flex; flex-direction: column; justify-content: space-between; align-items: center; width: 18px; padding: 4px 0; background: #4b4b4b; border-right: 2px solid #3d3d3d; }
.vscroll .chev, .hscroll .chev { color: #aaa; }
.statusbar { display: flex; height: 16px; background: #4f4f4f; font-size: 10px; line-height: 18px; padding-left: 4px; }
.pick { appearance: none; height: 16px; padding: 2px 0 0 3px; border-right: 1px solid #606060; background: #434343 url("data:image/svg+xml,%3Csvg xmlns='http://www.w3.org/2000/svg' width='10' height='10'%3E%3Cpath d='M2 3.500l3 3 3-3' fill='none' stroke='%23eee' stroke-width='1.600'/%3E%3C/svg%3E") no-repeat right 4px bottom 1px; }
.zoom { width: 68px; }
.page { width: 58px; }
.nav { display: flex; align-items: center; justify-content: space-evenly; width: 43px; fill: #777; }
.status-text { width: 198px; text-align: center; color: #ccc; border: solid #444; border-width: 0 1px; }
.status-more { width: 20px; }
.hscroll { position: relative; display: flex; flex: 1; align-items: center; justify-content: space-between; padding: 0 4px 0 2px; background: #4b4b4b; }
.thumb { position: absolute; left: 49%; top: 0; width: 25px; height: 15px; border-radius: 8px; background: #636363; }
.corner { width: 18px; border-right: 2px solid #3d3d3d; }

.dock { flex: none; width: 105px; border-right: 1px solid #383838; }
.dock-group { display: flex; flex-direction: column; padding: 3px 5px 2px; border-bottom: 1px solid #383838; }
.dock-group .grip-h { align-self: center; margin-bottom: 3px; }
.dock-group button { align-self: stretch; justify-content: flex-start; height: 28px; padding: 0 0 1px 5px; gap: 7px; font-size: 10px; font-weight: 600; color: #f0f0f0; white-space: nowrap; }
.dock-group svg { width: 20px; height: 20px; color: #c8c8c8; }
.dock-group .on { height: 24px; margin: 2px 0; padding-left: 4px; background: #353535; border: 1px solid #666; border-radius: 3px; }

.taskbar { display: flex; justify-content: space-between; height: 30px; background: #e2d2d6; color: #000; }
.apps { display: flex; }
.apps button { width: 37px; height: 30px; border: solid transparent; border-width: 2px 0; background-clip: padding-box; }
.apps .sys { width: 36px; }
.apps .sys + .run { margin-left: 2px; }
.apps .run { background: linear-gradient(#e81123, #e81123) center bottom / 28px 2px no-repeat border-box; }
.apps .front { background: linear-gradient(#e81123, #e81123) center bottom / 37px 2px no-repeat border-box, #f6eeee border-box; }
.adobe { width: 16px; height: 16px; border-radius: 3px; font: bold 9px/16px "Open Sans", sans-serif; text-align: center; }
.br { background: #000b1d; color: #fff; }
.ps { background: #001e36; color: #31a8ff; }
.ai { background: #330000; color: #ff9a00; }
.id { background: #49021f; color: #ff3366; }
.tray { display: flex; align-items: center; gap: 8px; width: 848px; padding-right: 24px; justify-content: flex-end; background: linear-gradient(#c6b7bb, #e2d2d6 8px); border-radius: 4px 0 0 0; }
.tray time { font-size: 11px; }
.notes { margin-left: 10px; }

.pathfinder { position: absolute; right: 105px; top: 475px; width: 232px; background: #535353; border: solid #383838; border-width: 4px 1px 1px; }
.pf-tabs { display: flex; height: 27px; background: #434343; border-bottom: 1px solid #383838; font-size: 10px; }
.pf-tabs button { padding: 0 5px 1px 8px; color: #a5a5a5; border-right: 1px solid #383838; font-weight: 600; }
.pf-tabs .on { height: 27px; background: #535353; color: #fff; }
.pf-tools { margin: auto 6px auto auto; }
.pf-body { padding: 7px 5px 12px; }
.pf-body h2 { margin: 0; font: 10px/14px "Open Sans", sans-serif; color: #ccc; }
.pf-row { display: flex; align-items: center; color: #c8c8c8; }
.pf-row svg { width: 14px; height: 14px; }
.modes-row { gap: 23px; height: 38px; padding-left: 6px; }
.finders-row { gap: 23px; padding: 11px 0 0 9px; }
.expand { width: 71px; height: 19px; margin-left: -5px; background: #5a5a5a; color: #777; border-radius: 2px; font-size: 10px; }

.leaders { position: absolute; left: 0; top: 0; pointer-events: none; }
.callout { position: absolute; display: flex; align-items: center; margin: 0; color: #ed1c24; font: 32px/45px "Open Sans", sans-serif; }
.tool-note { left: 126px; top: 594px; width: 229px; height: 95px; padding: 0 4px; border: 5px solid #ed1c24; }
.mesh-note { left: 259px; top: 798px; width: 262px; height: 186px; padding: 0 7px; border: 5px solid #3f48cc; }
```
